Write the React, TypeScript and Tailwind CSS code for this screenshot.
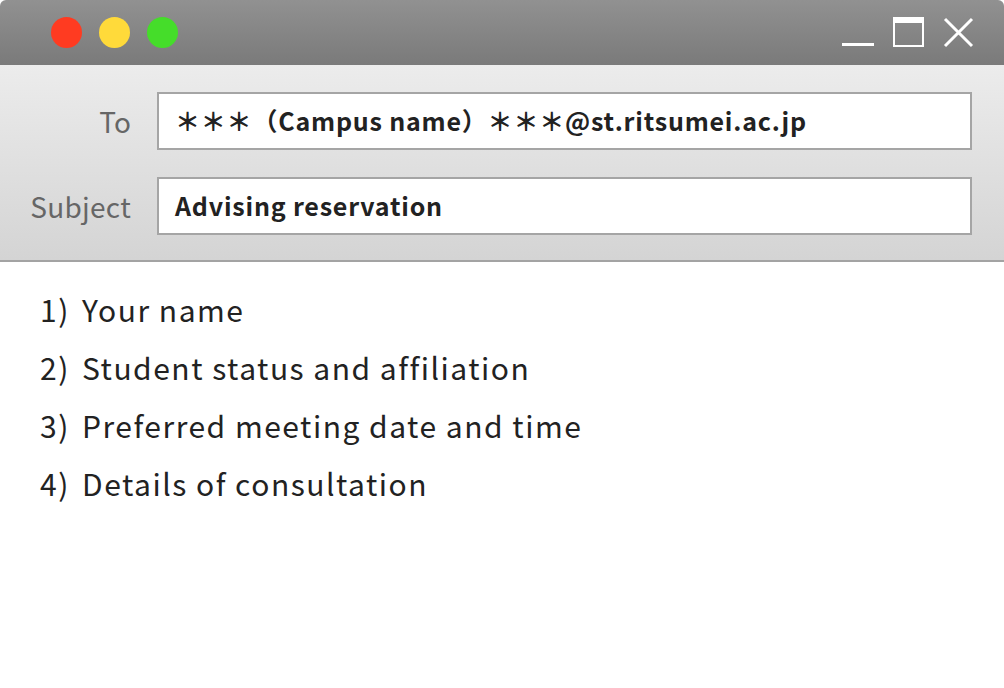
export default function App() {
  const items = [
    ['1)', 'Your name'],
    ['2)', 'Student status and affiliation'],
    ['3)', 'Preferred meeting date and time'],
    ['4)', 'Details of consultation'],
  ]

  return (
    <div className="w-[1004px] h-[688px] bg-white overflow-hidden font-['Noto_Sans_CJK_JP','Noto_Sans',sans-serif]">
      {/* Title bar */}
      <div className="h-[65px] rounded-t-[6px] bg-gradient-to-b from-[#919191] to-[#7a7a7a] flex items-center justify-between pl-[51px] pr-[30px]">
        <div className="flex gap-[17px] items-center">
          <div className="w-[31px] h-[31px] rounded-full bg-[#ff3b21]" />
          <div className="w-[31px] h-[31px] rounded-full bg-[#ffda3a]" />
          <div className="w-[31px] h-[31px] rounded-full bg-[#45dd2a]" />
        </div>
        <div className="flex items-center gap-[19px]">
          <svg width="32" height="32" viewBox="0 0 32 32">
            <rect x="0" y="26" width="32" height="3" fill="#fff" />
          </svg>
          <svg width="31" height="31" viewBox="0 0 31 31">
            <rect x="1" y="1" width="29" height="28" fill="none" stroke="#fff" strokeWidth="2" />
            <rect x="1" y="1" width="29" height="5" fill="#fff" />
          </svg>
          <svg width="31" height="31" viewBox="0 0 31 31">
            <path d="M2 2 L29 29 M29 2 L2 29" stroke="#fff" strokeWidth="3" />
          </svg>
        </div>
      </div>

      {/* Header fields */}
      <div className="bg-gradient-to-b from-[#ececec] to-[#d4d4d4] border-b-2 border-[#a3a3a3] pt-[27px] pb-[25px] pr-[32px] flex flex-col gap-[27px]">
        <div className="flex items-center">
          <div className="w-[131px] text-right text-[28px] text-[#666] leading-none">To</div>
          <div className="ml-[26px] flex-1 h-[58px] bg-white border-2 border-[#a5a5a5] flex items-center pl-[16px] text-[25px] font-bold text-[#222] tracking-[0.8px]">
            ＊＊＊（Campus name）＊＊＊@st.ritsumei.ac.jp
          </div>
        </div>
        <div className="flex items-center">
          <div className="w-[131px] text-right text-[28px] text-[#666] leading-none tracking-[0.3px]">Subject</div>
          <div className="ml-[26px] flex-1 h-[58px] bg-white border-2 border-[#a5a5a5] flex items-center pl-[16px] text-[25px] font-bold text-[#222] tracking-[0.8px]">
            Advising reservation
          </div>
        </div>
      </div>

      {/* Body */}
      <div className="pl-[40px] pt-[29px] flex flex-col gap-[22px]">
        {items.map(([n, t]) => (
          <div key={n} className="text-[30px] leading-[36px] text-[#222] tracking-[1.5px]">
            <span className="mr-[4px]">{n}</span> {t}
          </div>
        ))}
      </div>
    </div>
  )
}
